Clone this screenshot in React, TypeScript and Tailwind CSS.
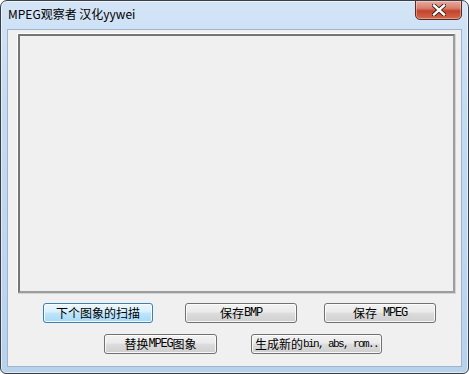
import React from "react";

const cjk = { fontFamily: '"Noto Sans CJK SC", "Noto Sans", sans-serif' };
const mono = { fontFamily: '"Liberation Mono", monospace' };

function Btn({
  children,
  className = "",
  focused = false,
}: {
  children: React.ReactNode;
  className?: string;
  focused?: boolean;
}) {
  return (
    <div
      className={
        "h-[20px] rounded-[3px] border flex items-center justify-center text-[12px] leading-none text-black whitespace-nowrap shadow-[inset_0_0_0_1px_rgba(255,255,255,0.8)] " +
        (focused
          ? "border-[#3c7fb1] bg-[linear-gradient(to_bottom,#eaf6fd_0%,#d9f0fc_45%,#bee6fd_50%,#a7d9f5_100%)] "
          : "border-[#707070] bg-[linear-gradient(to_bottom,#f2f2f2_0%,#ebebeb_45%,#dddddd_50%,#cfcfcf_100%)] ") +
        className
      }
      style={cjk}
    >
      {children}
    </div>
  );
}

function Latin({ children, tight = false }: { children: React.ReactNode; tight?: boolean }) {
  return (
    <span
      className={tight ? "text-[11px] tracking-[-1.6px]" : "text-[12px] tracking-[-1.2px]"}
      style={mono}
    >
      {children}
    </span>
  );
}

export default function App() {
  return (
    <div className="w-[469px] h-[374px] bg-white">
      {/* window frame */}
      <div className="w-[469px] h-[374px] rounded-t-[7px] rounded-b-[6px] border border-[#3a3f45] bg-[linear-gradient(to_bottom,#d3e4f6_0%,#c4dbf2_30%,#b9d2ec_100%)] shadow-[inset_0_0_0_1px_rgba(255,255,255,0.55)] flex flex-col overflow-hidden">
        {/* title bar */}
        <div className="h-[28px] flex items-start relative">
          <div className="pl-[7px] pt-[5px] text-[12px] leading-[16px] text-black" style={cjk}>
            MPEG观察者 汉化yywei
          </div>
          <div className="absolute right-[6px] top-[-1px] w-[47px] h-[20px] rounded-b-[5px] border border-[#5b2a22] bg-[linear-gradient(to_bottom,#e8a99c_0%,#d8806f_40%,#c4432c_55%,#d06a4c_100%)] shadow-[inset_0_0_0_1px_rgba(255,255,255,0.35)] flex items-center justify-center">
            <svg width="14" height="12" viewBox="0 0 14 12">
              <path
                d="M2 1.5 L12 10.5 M12 1.5 L2 10.5"
                stroke="#3b1a14"
                strokeWidth="4.2"
                strokeLinecap="square"
              />
              <path
                d="M2 1.5 L12 10.5 M12 1.5 L2 10.5"
                stroke="#ffffff"
                strokeWidth="2.4"
                strokeLinecap="square"
              />
            </svg>
          </div>
        </div>

        {/* client area */}
        <div className="mx-[6px] mb-[6px] flex-1 border border-[#9fb3cc] bg-[#f0f0f0] flex flex-col">
          <div className="ml-[9px] mt-[3px] w-[439px] h-[261px] border border-t-white border-l-white border-r-[#d4d4d4] border-b-[#d4d4d4]">
            <div className="w-full h-full border-2 border-t-[#757575] border-l-[#757575] border-r-[#9d9d9d] border-b-[#9d9d9d] bg-[#f0f0f0]" />
          </div>

          <div className="flex mt-[9px]">
            <Btn focused className="ml-[35px] w-[110px]">
              下个图象的扫描
            </Btn>
            <Btn className="ml-[32px] w-[112px]">
              保存<Latin>BMP</Latin>
            </Btn>
            <Btn className="ml-[27px] w-[112px]">
              保存<Latin>&nbsp;MPEG</Latin>
            </Btn>
          </div>

          <div className="flex mt-[11px]">
            <Btn className="ml-[96px] w-[113px]">
              替换<Latin>MPEG</Latin>图象
            </Btn>
            <Btn className="ml-[34px] w-[131px]">
              生成新的<Latin tight>bin, abs, rom..</Latin>
            </Btn>
          </div>
        </div>
      </div>
    </div>
  );
}
